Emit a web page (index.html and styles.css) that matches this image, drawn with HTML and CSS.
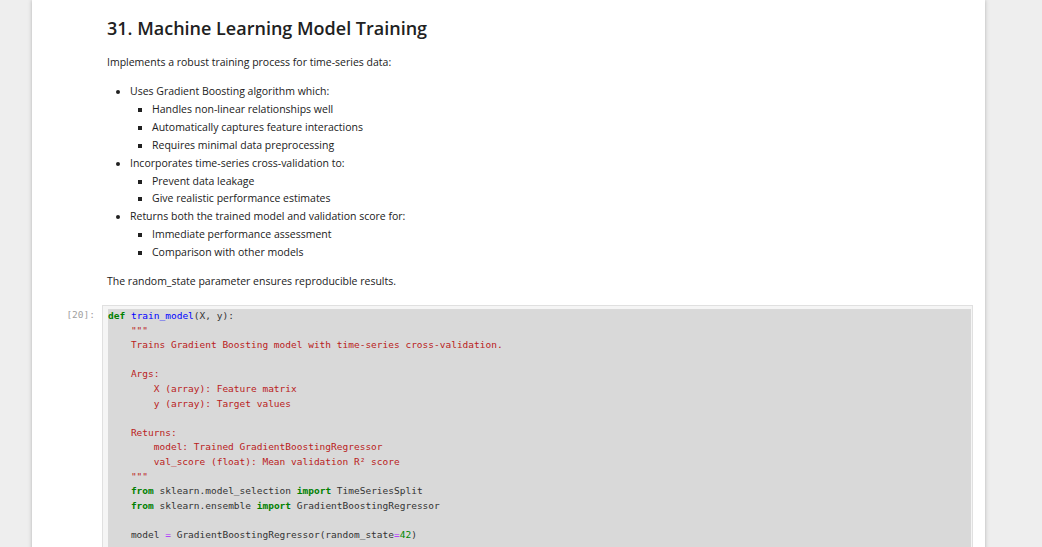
FILE: index.html
```html
<!DOCTYPE html>
<html>
<head>
<meta charset="utf-8">
<link rel="stylesheet" href="styles.css">
</head>
<body>
<div class="page">
  <div class="md-cell">
    <h1 class="title">31. Machine Learning Model Training</h1>
    <p class="para">Implements a robust training process for time-series data:</p>
    <ul class="list">
      <li>Uses Gradient Boosting algorithm which:
        <ul class="sublist">
          <li>Handles non-linear relationships well</li>
          <li>Automatically captures feature interactions</li>
          <li>Requires minimal data preprocessing</li>
        </ul>
      </li>
      <li>Incorporates time-series cross-validation to:
        <ul class="sublist">
          <li>Prevent data leakage</li>
          <li>Give realistic performance estimates</li>
        </ul>
      </li>
      <li>Returns both the trained model and validation score for:
        <ul class="sublist">
          <li>Immediate performance assessment</li>
          <li>Comparison with other models</li>
        </ul>
      </li>
    </ul>
    <p class="para last">The random_state parameter ensures reproducible results.</p>
  </div>
  <div class="code-cell">
    <div class="prompt">[20]:</div>
    <div class="editor">
      <div class="code">
        <div class="line"><span class="kw">def</span> <span class="fn">train_model</span>(X, y):</div>
        <div class="line">    <span class="st">"""</span></div>
        <div class="line st">    Trains Gradient Boosting model with time-series cross-validation.</div>
        <div class="line"> </div>
        <div class="line st">    Args:</div>
        <div class="line st">        X (array): Feature matrix</div>
        <div class="line st">        y (array): Target values</div>
        <div class="line"> </div>
        <div class="line st">    Returns:</div>
        <div class="line st">        model: Trained GradientBoostingRegressor</div>
        <div class="line st">        val_score (float): Mean validation R² score</div>
        <div class="line st">    """</div>
        <div class="line">    <span class="kw">from</span> sklearn.model_selection <span class="kw">import</span> TimeSeriesSplit</div>
        <div class="line">    <span class="kw">from</span> sklearn.ensemble <span class="kw">import</span> GradientBoostingRegressor</div>
        <div class="line"> </div>
        <div class="line">    model <span class="op">=</span> GradientBoostingRegressor(random_state<span class="op">=</span><span class="nu">42</span>)</div>
      </div>
    </div>
  </div>
</div>
</body>
</html>
```
FILE: styles.css
```css
html, body {
  margin: 0;
  padding: 0;
  background: #eeeeee;
  height: 100%;
  overflow: hidden;
}
.page {
  margin-left: 32px;
  width: 953px;
  min-height: 100%;
  background: #ffffff;
  box-shadow: 0 0 4px rgba(0,0,0,0.25);
  font-family: "Open Sans", "Noto Sans", sans-serif;
  color: #212121;
}
.md-cell {
  padding: 14px 0 0 75px;
}
.title {
  margin: 0;
  font-size: 18px;
  font-weight: 600;
  line-height: 28px;
}
.para {
  margin: 12px 0 0 0;
  font-size: 10.5px;
  line-height: 16px;
}
.para.last {
  margin-top: 11px;
}
.list {
  margin: 13px 0 0 0;
  padding-left: 23px;
  font-size: 10.5px;
  line-height: 17.9px;
  list-style: disc;
}
.sublist {
  margin: 0;
  padding-left: 22px;
  list-style: square;
}
.code-cell {
  display: flex;
  margin-top: 16px;
  padding-right: 12px;
}
.prompt {
  width: 63px;
  padding-right: 7px;
  text-align: right;
  font-family: "DejaVu Sans Mono", monospace;
  font-size: 9.5px;
  line-height: 14.6px;
  color: #a0a0a0;
  padding-top: 3px;
}
.editor {
  flex: 1;
  border: 1px solid #e0e0e0;
  background: #f5f5f5;
  padding: 3px 1px 0 5px;
}
.code {
  background: #d9d9d9;
  font-family: "DejaVu Sans Mono", monospace;
  font-size: 9.5px;
  line-height: 14.6px;
  color: #333333;
  padding-bottom: 20px;
}
.line {
  white-space: pre;
  height: 14.6px;
}
.kw { color: #008000; font-weight: bold; }
.fn { color: #0000ff; }
.st { color: #ba2121; }
.op { color: #aa22ff; }
.nu { color: #008800; }
```
